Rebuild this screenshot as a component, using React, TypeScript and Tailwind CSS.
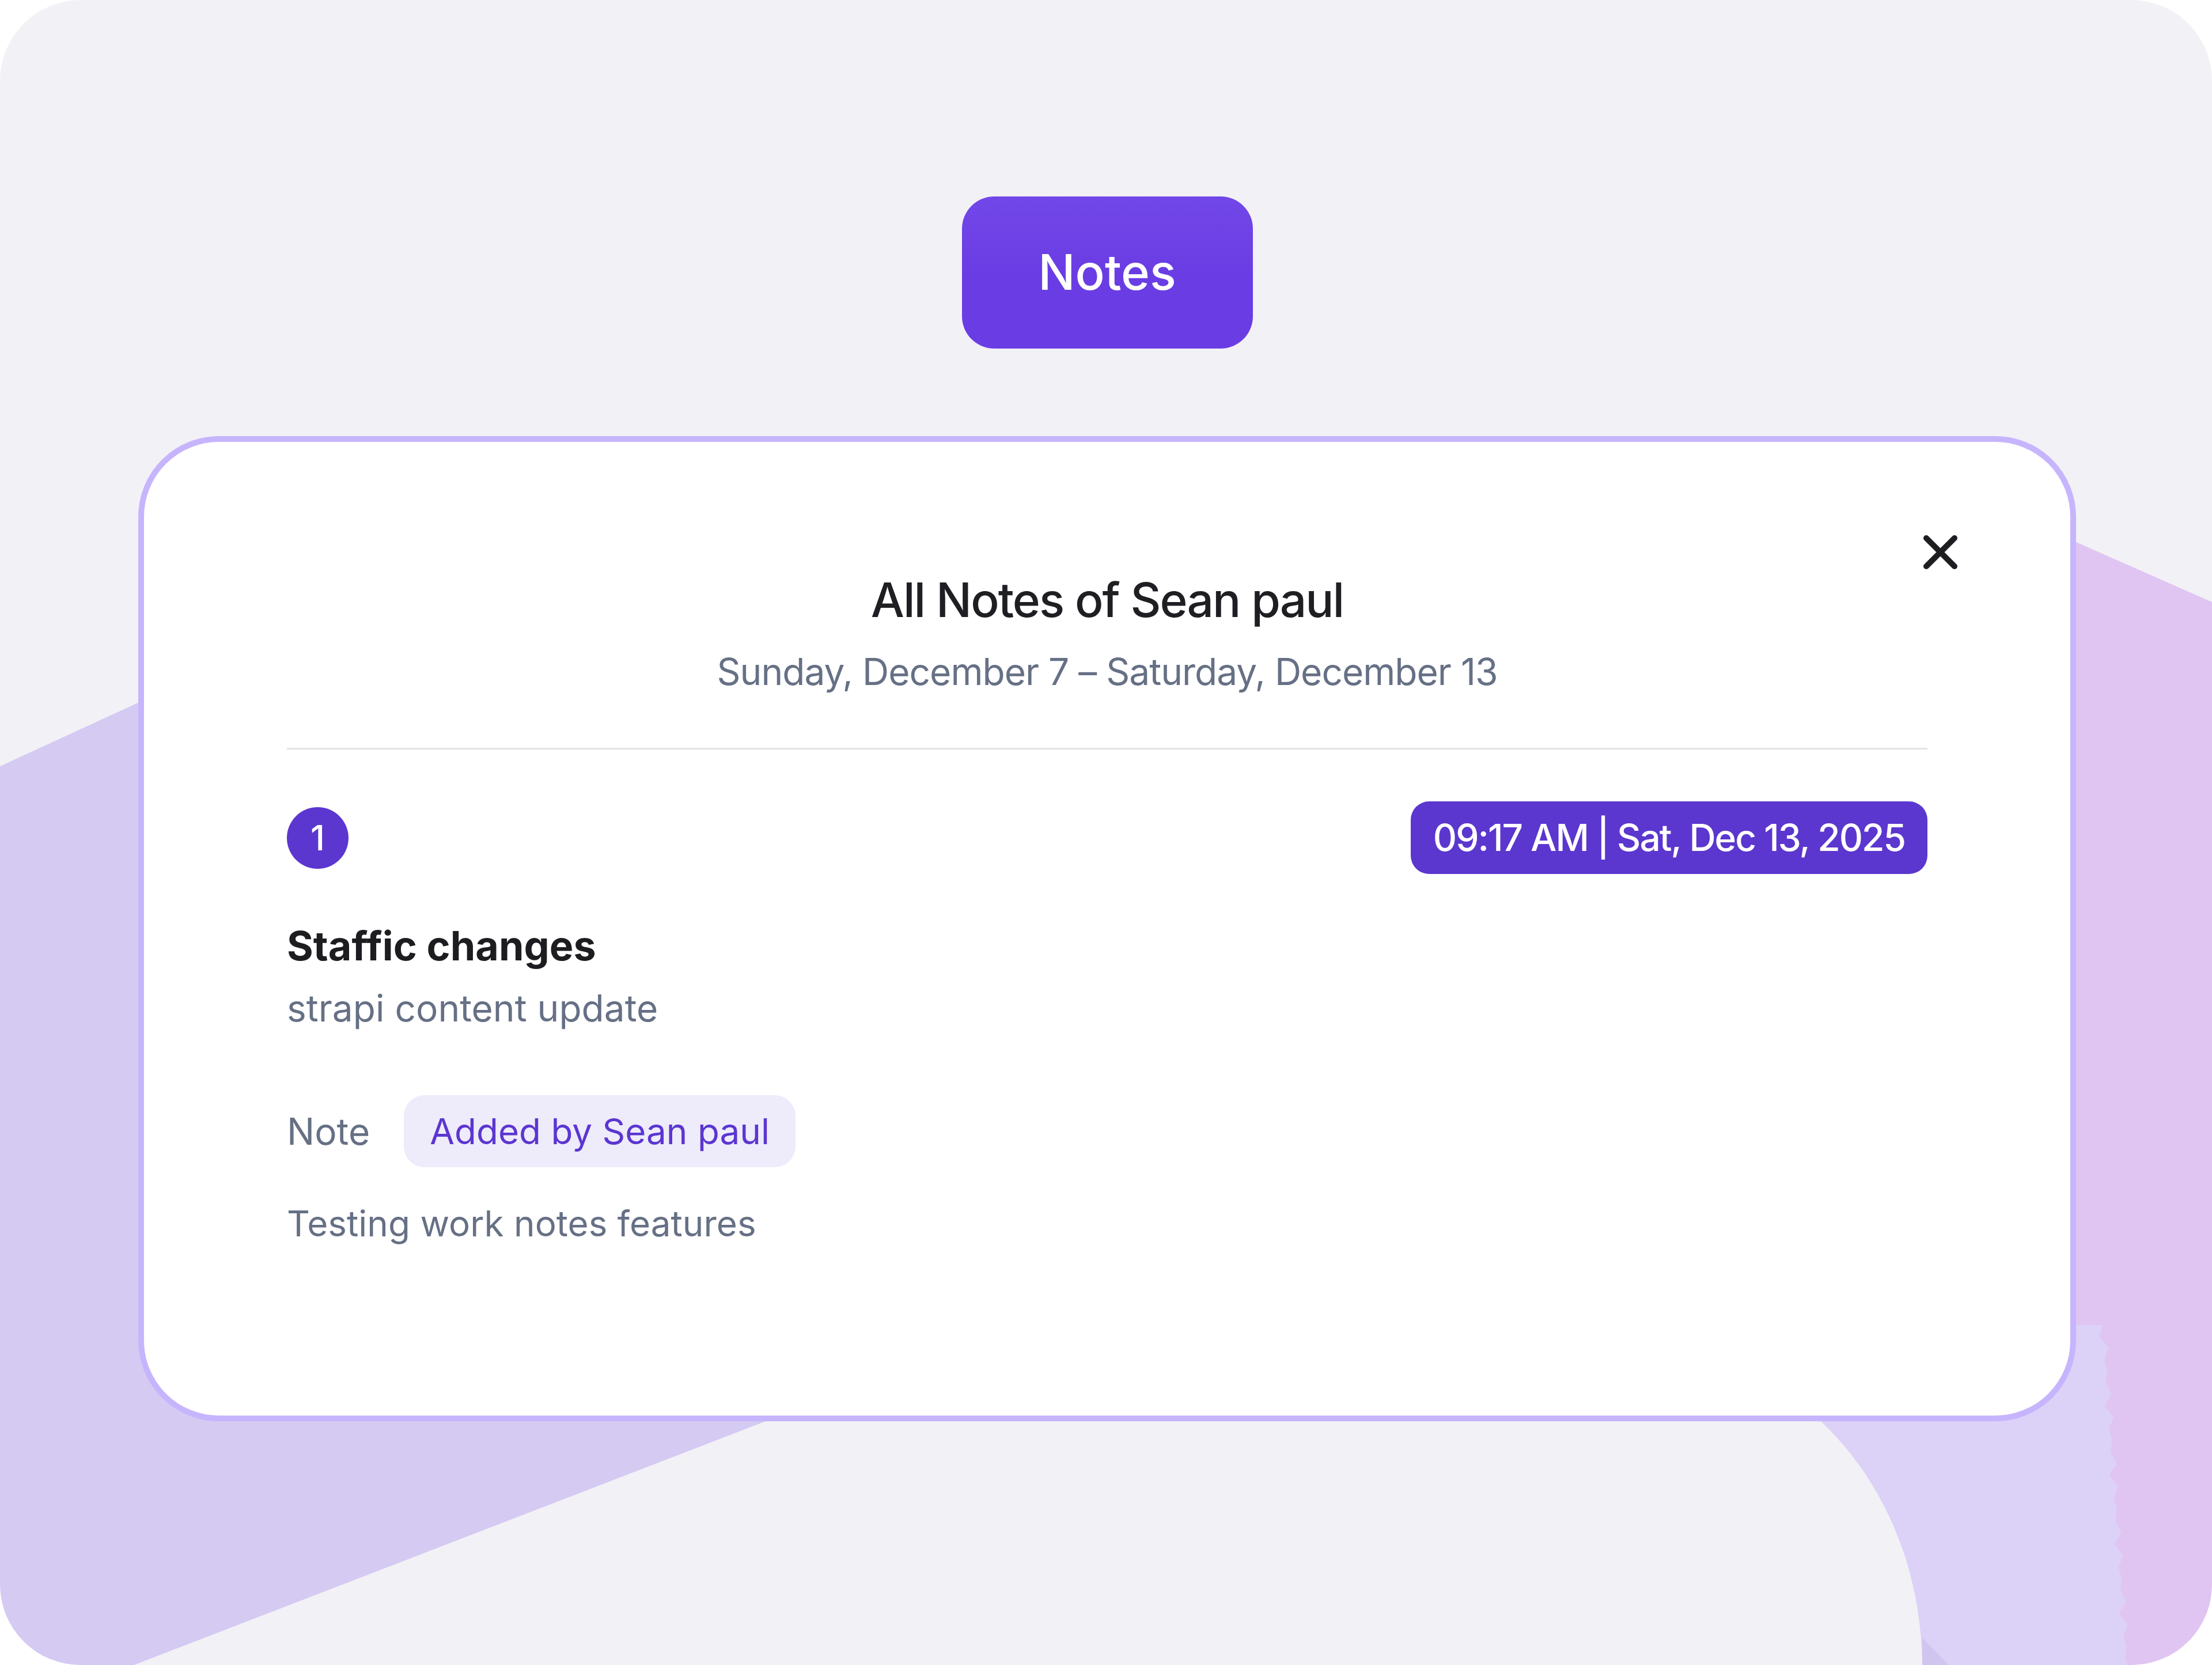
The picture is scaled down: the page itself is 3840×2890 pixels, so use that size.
import React from "react";

const font = { fontFamily: "Inter, 'Open Sans', sans-serif" };

function Backdrop() {
  // soft violet shapes behind the card
  const fuzz: string[] = [];
  for (let i = 0; i <= 30; i++) {
    const y = 2320 + i * 20;
    const x = 3650 + i * 1.4 + (i % 2 === 0 ? 0 : 9) + (i % 3 === 0 ? -5 : 0);
    fuzz.push(`${x},${y}`);
  }
  return (
    <svg
      className="absolute inset-0 h-full w-full"
      viewBox="0 0 3840 2890"
      preserveAspectRatio="none"
    >
      <polygon
        points="0,1330 400,1146 1500,1146 1500,2401 -120,3026 -120,1330"
        fill="#d5caf2"
      />
      <polygon
        points="3400,851 3840,1045 3840,2900 3600,2900 3560,2300 3400,2300"
        fill="#e0c5f2"
      />
      <path
        d={`M3300,2300 L3650,2300 L${fuzz.join(" L")} L3337,2920 L3337,2890 C3335,2720 3270,2570 3161,2467 L3300,2420 Z`}
        fill="#dcd1f7"
      />
      <polygon points="3337,2843 3383,2890 3337,2890" fill="#cfc5ee" />
    </svg>
  );
}

export default function App() {
  return (
    <div className="min-h-screen bg-white" style={font}>
      <div className="relative h-[2890px] w-[3840px] overflow-hidden rounded-[140px] bg-[#f2f1f6]">
        <Backdrop />
        <div className="relative flex flex-col items-center pl-[4px] pt-[341px]">
          <button className="flex h-[264px] w-[505px] items-center justify-center rounded-[56px] bg-gradient-to-b from-[#7247e8] via-[#6a3de4] to-[#6a3de4] text-[85px] font-medium text-white">
            Notes
          </button>

          <div className="relative mt-[152px] w-[3364px] rounded-[140px] border-[10px] border-[#c6b5fd] bg-white px-[248px] pb-[295px] pt-[223px]">
            <button className="absolute right-[195px] top-[161px] h-[61px] w-[61px]">
              <svg viewBox="0 0 61 61" className="h-full w-full">
                <path
                  d="M6 6 L55 55 M55 6 L6 55"
                  stroke="#1e1e22"
                  strokeWidth="10"
                  strokeLinecap="round"
                />
              </svg>
            </button>

            <div className="flex flex-col items-center">
              <h1 className="text-[82px] font-medium leading-[104px] tracking-[-2px] text-[#1f1f23]">
                All Notes of Sean paul
              </h1>
              <p className="mt-[32px] text-[64px] leading-[80px] tracking-[-1px] text-[#667085]">
                Sunday, December 7 – Saturday, December 13
              </p>
            </div>

            <div className="mt-[92px] h-[3px] w-full bg-[#e2e2e7]" />

            <div className="mt-[90px] flex items-center justify-between">
              <div className="flex h-[107px] w-[107px] items-center justify-center rounded-full bg-[#5b36cf] text-[60px] font-medium text-white">
                1
              </div>
              <div className="flex h-[126px] items-center rounded-[32px] bg-[#5b36cf] px-[39px] text-[64px] font-medium tracking-[-2px] text-white">
                09:17 AM | Sat, Dec 13, 2025
              </div>
            </div>

            <h2 className="mt-[83px] text-[70px] font-bold leading-[84px] text-[#1d1d21]">
              Staffic changes
            </h2>
            <p className="mt-[28px] text-[64px] leading-[76px] text-[#667085]">
              strapi content update
            </p>

            <div className="mt-[113px] flex items-center gap-[59px]">
              <span className="text-[64px] leading-[76px] text-[#667085]">Note</span>
              <span className="flex h-[125px] items-center rounded-[36px] bg-[#eeebfb] px-[45px] text-[62px] text-[#5b36d0]">
                Added by Sean paul
              </span>
            </div>

            <p className="mt-[60px] text-[62px] leading-[76px] text-[#667085]">
              Testing work notes features
            </p>
          </div>
        </div>
      </div>
    </div>
  );
}
